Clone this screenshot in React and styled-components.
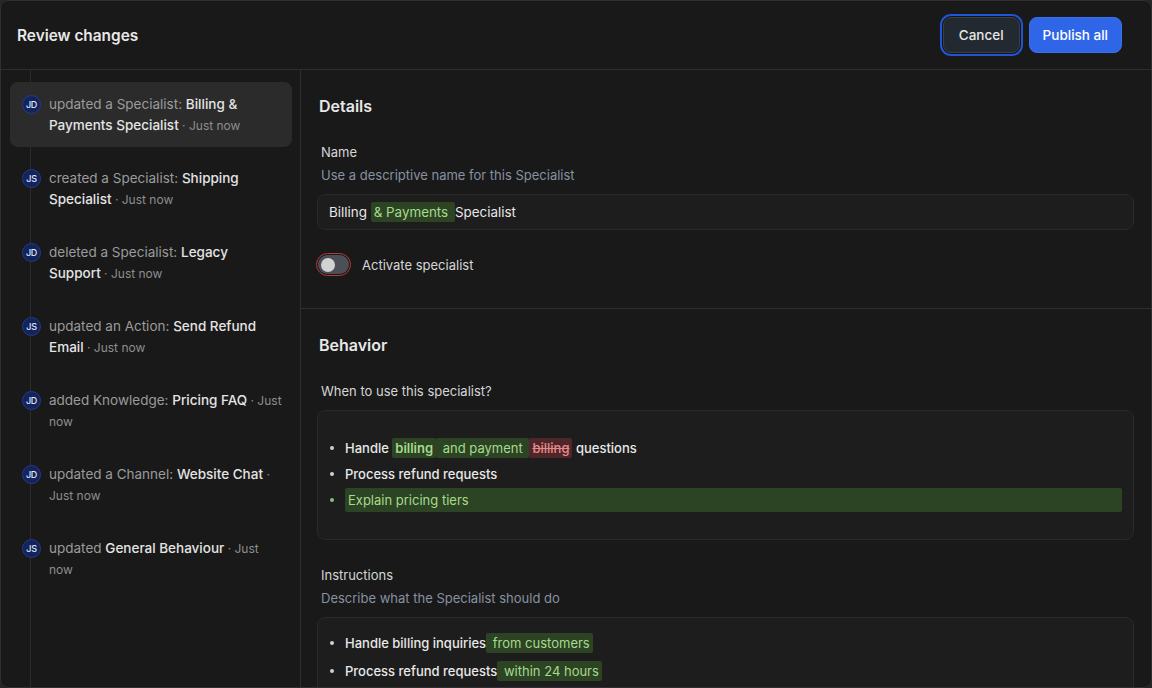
import React from 'react';
import styled, { createGlobalStyle } from 'styled-components';

const GlobalStyle = createGlobalStyle`
  html, body {
    margin: 0;
    padding: 0;
    background: #262626;
  }
  * {
    box-sizing: border-box;
  }
  body {
    font-family: Inter, "Noto Sans", "Liberation Sans", sans-serif;
    -webkit-font-smoothing: antialiased;
  }
`

const Modal = styled.div`
  width: 1152px;
  height: 688px;
  background: #191919;
  border: 1px solid #303030;
  border-radius: 8px;
  display: flex;
  flex-direction: column;
  overflow: hidden;
  color: #e6e6e6;
`

const Header = styled.header`
  height: 69px;
  flex-shrink: 0;
  display: flex;
  align-items: center;
  justify-content: space-between;
  padding: 0 29px 0 16px;
  border-bottom: 1px solid #2e2e2e;
`

const Title = styled.h1`
  margin: 0;
  font-size: 15.4px;
  font-weight: 600;
  color: #e8e8e8;
`

const Actions = styled.div`
  display: flex;
  gap: 9px;
  align-items: center;
`

const Button = styled.button`
  height: 36px;
  padding: 0 ${p => (p.$primary ? 13 : 15)}px;
  border-radius: 8px;
  font-family: inherit;
  font-size: 13.5px;
  font-weight: 500;
  cursor: pointer;
  border: 1px solid ${p => (p.$primary ? '#3a6ff0' : '#3a3f46')};
  background: ${p => (p.$primary ? '#2f66e8' : '#232930')};
  color: ${p => (p.$primary ? '#ffffff' : '#e6e6e6')};
  box-shadow: ${p => (p.$focused ? '0 0 0 1px #141414, 0 0 0 3px #1f55d6' : 'none')};
`

const Body = styled.div`
  flex: 1;
  display: flex;
  min-height: 0;
`

const Sidebar = styled.aside`
  width: 300px;
  flex-shrink: 0;
  border-right: 1px solid #2e2e2e;
  position: relative;
  padding: 12px 8px 12px 9px;
  display: flex;
  flex-direction: column;
  gap: 9px;

  &::before {
    content: '';
    position: absolute;
    left: 29px;
    top: 0;
    bottom: 0;
    width: 1px;
    background: #2c2c2c;
  }
`

const Item = styled.div`
  position: relative;
  display: flex;
  gap: 8px;
  padding: 12px 9px 11px 12px;
  border-radius: 8px;
  background: ${p => (p.$active ? '#2b2b2b' : 'transparent')};
`

const Avatar = styled.div`
  width: 19px;
  height: 19px;
  margin-top: 1px;
  flex-shrink: 0;
  border-radius: 50%;
  background: #14245a;
  border: 1px solid #223a8a;
  color: #dfe6ff;
  font-size: 9px;
  font-weight: 500;
  display: flex;
  align-items: center;
  justify-content: center;
  letter-spacing: -0.3px;
`

const ItemText = styled.p`
  margin: 0;
  font-size: 13.5px;
  line-height: 21px;
  color: #9b9b9b;
`

const Target = styled.span`
  color: #e4e4e4;
  font-weight: 500;
`

const Time = styled.span`
  color: #8e8e8e;
  font-size: 12px;
  line-height: 12px;
`

const Main = styled.main`
  flex: 1;
  overflow: hidden;
`

const Section = styled.section`
  padding: 24px 17px 32px 16px;
  border-bottom: ${p => (p.$divider ? '1px solid #283230' : 'none')};
`

const SectionTitle = styled.h2`
  margin: 0 0 24px 2px;
  font-size: 16px;
  line-height: 24px;
  font-weight: 600;
  color: #e8e8e8;
`

const Label = styled.div`
  margin-left: 4px;
  font-size: 13px;
  line-height: 20px;
  color: #d6d6d6;
`

const Hint = styled.div`
  margin: 3px 0 0 4px;
  font-size: 13px;
  line-height: 20px;
  color: #8791a0;
`

const Field = styled.div`
  margin-top: 9px;
  height: 36px;
  border: 1px solid #2a2a2a;
  border-radius: 8px;
  background: #1d1d1d;
  display: flex;
  align-items: center;
  padding: 0 11px;
  font-size: 13.4px;
  color: #e8e8e8;
  white-space: pre;
`

const Added = styled.span`
  background: #2c4424;
  color: #a7da8c;
  border-radius: 2px;
  padding: 2px 3px;
  font-weight: ${p => (p.$bold ? 600 : 400)};
`

const Removed = styled.span`
  background: #4e2528;
  color: #e48a8a;
  border-radius: 2px;
  padding: 2px 3px;
  text-decoration: line-through;
`

const ToggleRow = styled.label`
  margin-top: 23px;
  display: flex;
  align-items: center;
  gap: 11px;
  font-size: 13px;
  color: #d6d6d6;
`

const Toggle = styled.span`
  width: 35px;
  height: 23px;
  border-radius: 12px;
  border: 1px solid #b8383c;
  padding: 1px;
  display: flex;
  margin-left: -1px;
`

const Track = styled.span`
  flex: 1;
  border-radius: 10px;
  background: #4b5058;
  display: flex;
  align-items: center;
  padding: 0 3px;
`

const Knob = styled.span`
  width: 14px;
  height: 14px;
  border-radius: 50%;
  background: #d2d2d2;
`

const Group = styled.div`
  margin-top: ${p => p.$top || 0}px;
`

const Editor = styled.div`
  margin-top: 9px;
  border: 1px solid #2a2a2a;
  border-radius: 8px;
  background: #1d1d1d;
  padding: ${p => p.$pad};
  display: flex;
  flex-direction: column;
  gap: ${p => p.$gap}px;
`

const Row = styled.div`
  display: flex;
  align-items: center;
  min-height: 24px;
  font-size: 13px;
  font-weight: 500;
  color: #e8e8e8;
  white-space: pre;
`

const Dot = styled.span`
  width: 4px;
  height: 4px;
  border-radius: 50%;
  background: ${p => (p.$green ? '#8fbf78' : '#d0d0d0')};
  margin-right: 11px;
  flex-shrink: 0;
`

const AddedBlock = styled.div`
  flex: 1;
  height: 24px;
  display: flex;
  align-items: center;
  padding-left: 3px;
  background: #2c4424;
  color: #a7da8c;
  border-radius: 2px;
  font-weight: 400;
`

const changes = [
  { who: 'JD', action: 'updated a Specialist: ', target: 'Billing & Payments Specialist', active: true },
  { who: 'JS', action: 'created a Specialist: ', target: 'Shipping Specialist' },
  { who: 'JD', action: 'deleted a Specialist: ', target: 'Legacy Support' },
  { who: 'JS', action: 'updated an Action: ', target: 'Send Refund Email' },
  { who: 'JD', action: 'added Knowledge: ', target: 'Pricing FAQ' },
  { who: 'JD', action: 'updated a Channel: ', target: 'Website Chat' },
  { who: 'JS', action: 'updated ', target: 'General Behaviour' },
];

export default function App() {
  return (
    <>
      <GlobalStyle />
      <Modal>
        <Header>
          <Title>Review changes</Title>
          <Actions>
            <Button $focused>Cancel</Button>
            <Button $primary>Publish all</Button>
          </Actions>
        </Header>
        <Body>
          <Sidebar>
            {changes.map((c, i) => (
              <Item key={i} $active={c.active}>
                <Avatar>{c.who}</Avatar>
                <ItemText>
                  {c.action}
                  <Target>{c.target}</Target>
                  <Time> · Just now</Time>
                </ItemText>
              </Item>
            ))}
          </Sidebar>
          <Main>
            <Section $divider>
              <SectionTitle>Details</SectionTitle>
              <Label>Name</Label>
              <Hint>Use a descriptive name for this Specialist</Hint>
              <Field>
                Billing <Added>&amp; Payments </Added>Specialist
              </Field>
              <ToggleRow>
                <Toggle>
                  <Track>
                    <Knob />
                  </Track>
                </Toggle>
                Activate specialist
              </ToggleRow>
            </Section>
            <Section>
              <SectionTitle>Behavior</SectionTitle>
              <Group>
                <Label>When to use this specialist?</Label>
                <Editor $pad="25px 11px 27px 12px" $gap={2}>
                  <Row>
                    <Dot />
                    Handle <Added $bold>billing</Added><Added> and payment </Added><Removed>billing</Removed> questions
                  </Row>
                  <Row>
                    <Dot />
                    Process refund requests
                  </Row>
                  <Row>
                    <Dot $green />
                    <AddedBlock>Explain pricing tiers</AddedBlock>
                  </Row>
                </Editor>
              </Group>
              <Group $top={25}>
                <Label>Instructions</Label>
                <Hint>Describe what the Specialist should do</Hint>
                <Editor $pad="13px 11px 20px 12px" $gap={4}>
                  <Row>
                    <Dot />
                    Handle billing inquiries<Added> from customers</Added>
                  </Row>
                  <Row>
                    <Dot />
                    Process refund requests<Added> within 24 hours</Added>
                  </Row>
                  <Row>
                    <Dot />
                    Escalate disputes to a human agent
                  </Row>
                </Editor>
              </Group>
            </Section>
          </Main>
        </Body>
      </Modal>
    </>
  );
}
